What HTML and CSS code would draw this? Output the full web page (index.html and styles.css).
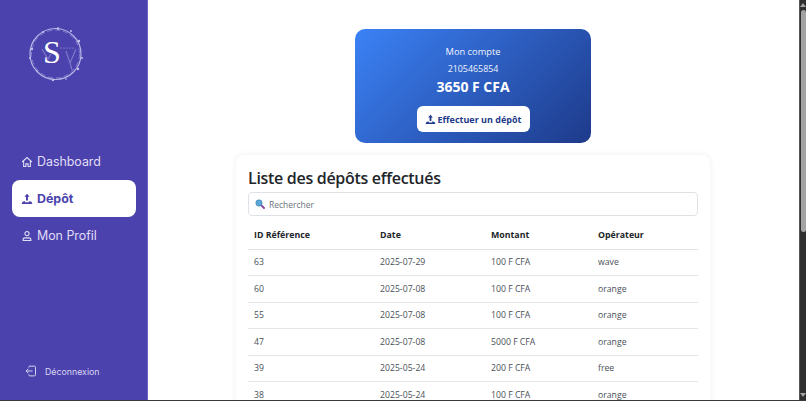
FILE: index.html
```html
<!DOCTYPE html>
<html lang="fr">
<head>
<meta charset="utf-8">
<title>Dépôts</title>
<link rel="stylesheet" href="styles.css">
</head>
<body>
<div class="frame">
  <aside class="sidebar">
    <div class="logo">
      <svg width="60" height="60" viewBox="0 0 60 60" fill="none">
        <circle cx="29.5" cy="29" r="25.500" stroke="#b9b5e6" stroke-width="1.200"/>
        <circle cx="29.5" cy="29" r="24" stroke="#8f89d6" stroke-width=".8" stroke-dasharray="5 3"/>
        <g fill="#c4c0ec">
          <circle cx="17" cy="7" r="1"/><circle cx="32" cy="3.500" r="1.200"/><circle cx="45" cy="6" r="1"/><circle cx="53" cy="16" r="1.200"/>
          <circle cx="56" cy="33" r="1"/><circle cx="52" cy="44" r="1.200"/><circle cx="40" cy="54" r=".8"/><circle cx="27" cy="55" r="1.200"/>
          <circle cx="11" cy="46" r=".8"/><circle cx="4" cy="33" r="1"/><circle cx="6" cy="24" r="1.200"/>
        </g>
        <path d="M16 24l6 10 3-5M40 26l4 12 6-14M44 38l2 7" stroke="#7d77cc" stroke-width="1.200"/>
        <g fill="#c4c0ec">
          <circle cx="35" cy="23" r=".5"/><circle cx="38" cy="23" r=".5"/><circle cx="41" cy="23" r=".5"/><circle cx="44" cy="23" r=".5"/><circle cx="47" cy="23" r=".5"/>
        </g>
        <text x="26" y="38" text-anchor="middle" class="logo-s">S</text>
      </svg>
    </div>
    <nav class="nav">
      <a class="nav-item">
        <svg class="nav-icon" viewBox="0 0 16 16" fill="none" stroke="currentColor" stroke-width="1.400"><path d="M1.500 8 8 2l6.500 6M3.500 6.500V14h3v-3.500h3V14h3V6.500"/></svg>
        Dashboard
      </a>
      <a class="nav-item active">
        <svg class="nav-icon" viewBox="0 0 16 16" fill="currentColor"><path d="M8 1 4.500 5h2.200v5h2.600V5h2.200z"/><path d="M1 14.500c0-2.200 1.500-3.500 3.500-3.500h1v1.200h5V11h1c2 0 3.500 1.300 3.500 3.500z"/></svg>
        Dépôt
      </a>
      <a class="nav-item">
        <svg class="nav-icon" viewBox="0 0 16 16" fill="none" stroke="currentColor" stroke-width="1.400"><circle cx="8" cy="4.800" r="2.800"/><path d="M2.800 14v-1c0-1.700 1.300-2.500 3-2.500h4.400c1.700 0 3 .8 3 2.500v1z"/></svg>
        Mon Profil
      </a>
    </nav>
    <a class="logout">
      <svg class="logout-icon" viewBox="0 0 16 16" fill="none" stroke="currentColor" stroke-width="1.300"><path d="M5 3.500V3a1.500 1.500 0 0 1 1.500-1.500h6A1.500 1.500 0 0 1 14 3v10a1.500 1.500 0 0 1-1.500 1.500h-6A1.500 1.500 0 0 1 5 13v-.5M10 8H1.500M4.500 5 1.500 8l3 3"/></svg>
      Déconnexion
    </a>
  </aside>
  <main class="main">
    <section class="account">
      <p class="account-label">Mon compte</p>
      <p class="account-number">2105465854</p>
      <p class="account-balance">3650 F CFA</p>
      <button class="deposit-btn">
        <svg class="btn-icon" viewBox="0 0 16 16" fill="currentColor"><path d="M8 1 4.500 5h2.200v5h2.600V5h2.200z"/><path d="M1 14.500c0-2.200 1.500-3.500 3.500-3.500h1v1.200h5V11h1c2 0 3.500 1.300 3.500 3.500z"/></svg>
        Effectuer un dépôt
      </button>
    </section>
    <section class="list">
      <h2 class="list-title">Liste des dépôts effectués</h2>
      <div class="search">
        <svg class="search-icon" viewBox="0 0 12 12"><path d="M7 7l3.800 3.800" stroke="#8a3f9e" stroke-width="2.200" stroke-linecap="round"/><circle cx="4.800" cy="4.800" r="3.800" fill="#5ba7d8" stroke="#3f83b5" stroke-width=".8"/></svg>
        <span>Rechercher</span>
      </div>
      <table class="table">
        <colgroup><col class="c1"><col class="c2"><col class="c3"><col class="c4"></colgroup>
        <thead><tr><th>ID Référence</th><th>Date</th><th>Montant</th><th>Opérateur</th></tr></thead>
        <tbody>
          <tr><td>63</td><td>2025-07-29</td><td>100 F CFA</td><td>wave</td></tr>
          <tr><td>60</td><td>2025-07-08</td><td>100 F CFA</td><td>orange</td></tr>
          <tr><td>55</td><td>2025-07-08</td><td>100 F CFA</td><td>orange</td></tr>
          <tr><td>47</td><td>2025-07-08</td><td>5000 F CFA</td><td>orange</td></tr>
          <tr><td>39</td><td>2025-05-24</td><td>200 F CFA</td><td>free</td></tr>
          <tr><td>38</td><td>2025-05-24</td><td>100 F CFA</td><td>orange</td></tr>
        </tbody>
      </table>
    </section>
  </main>
  <div class="scrollbar">
    <span class="arrow-up"></span>
    <span class="thumb"></span>
    <span class="arrow-down"></span>
  </div>
</div>
</body>
</html>
```

FILE: styles.css
```css
* { box-sizing: border-box; }
html, body { margin: 0; height: 401px; overflow: hidden; background: #fff; }
body { font-family: "Open Sans", "Liberation Sans", sans-serif; color: #212529; }
.frame { display: flex; height: 401px; border-bottom: 1px solid #3a3a3a; }

.sidebar { width: 148px; flex: none; background: #4b42ad; border-right: 1px solid #6d66c2; display: flex; flex-direction: column; padding: 0 11px 0 12px; }
.logo { height: 143px; padding: 25px 0 0 14px; flex: none; }
.logo svg { display: block; }
.logo-s { font-family: "Liberation Serif", serif; font-size: 32px; fill: #fff; }
.nav { display: flex; flex-direction: column; }
.nav-item { height: 37px; display: flex; align-items: center; gap: 4px; padding-left: 9px; border-radius: 8px; color: #e0def5; font-family: "Inter", sans-serif; font-size: 12.400px; }
.nav-item.active { background: #fff; color: #4b42ad; font-weight: 700; }
.nav-icon { width: 12px; height: 12px; flex: none; }
.logout { margin-top: auto; margin-bottom: 21px; display: flex; align-items: center; gap: 8px; padding-left: 13px; color: #d9d6f2; font-family: "Inter", sans-serif; font-size: 8.800px; height: 16px; }
.logout-icon { width: 12px; height: 12px; flex: none; }

.main { flex: 1; min-width: 0; overflow: hidden; display: flex; flex-direction: column; align-items: center; padding: 29px 1px 0 0; }
.account { width: 236px; height: 114px; flex: none; border-radius: 10px; background: linear-gradient(135deg, #3b82f6, #1e3a8a); color: #fff; display: flex; flex-direction: column; align-items: center; padding-top: 14px; }
.account p { margin: 0; }
.account-label { font-size: 9.300px; line-height: 16px; color: #f0f4fe; padding-top: 1px; }
.account-number { font-size: 8.900px; line-height: 16px; margin-top: 1px !important; color: #f0f4fe; }
.account-balance { font-size: 14px; font-weight: 700; line-height: 20px; }
.deposit-btn { margin-top: 9px; width: 113px; height: 26px; border: 0; border-radius: 6px; background: #fff; color: #1e3a8a; font-family: inherit; font-size: 9px; font-weight: 700; display: flex; align-items: center; justify-content: center; gap: 2px; padding: 0; }
.btn-icon { width: 11px; height: 11px; flex: none; }

.list { width: 474px; flex: none; margin-top: 12px; padding: 10px 12px 0; border-radius: 8px; background: #fff; box-shadow: 0 0 6px rgba(0, 0, 0, .07); }
.list-title { margin: 0; font-size: 16px; font-weight: 600; letter-spacing: -.3px; line-height: 26px; color: #212529; }
.search { height: 24px; margin-top: 1px; border: 1px solid #dee2e6; border-radius: 4px; display: flex; align-items: center; gap: 4px; padding-left: 6px; font-size: 8.500px; color: #6c757d; }
.search-icon { width: 10px; height: 10px; flex: none; }
.table { width: 450px; margin-top: 6px; border-collapse: collapse; table-layout: fixed; font-size: 8.700px; }
.c1 { width: 126px; } .c2 { width: 111px; } .c3 { width: 107px; } .c4 { width: 106px; }
.table th { height: 27px; padding: 0 6px; text-align: left; font-weight: 700; font-size: 8.800px; border-bottom: 1px solid #dee2e6; color: #212529; }
.table td { height: 26.500px; padding: 0 6px; color: #495057; border-bottom: 1px solid #e3e6ea; }

.scrollbar { width: 7px; flex: none; background: #2f2f2f; display: flex; flex-direction: column; align-items: center; padding: 3px 0 3px; border-left: 1px solid #555; }
.thumb { width: 5px; height: 222px; margin-top: 3px; border-radius: 3px; background: #a3a3a3; }
.arrow-up, .arrow-down { width: 0; height: 0; border-left: 3px solid transparent; border-right: 3px solid transparent; }
.arrow-up { border-bottom: 4px solid #a3a3a3; }
.arrow-down { margin-top: auto; border-top: 4px solid #a3a3a3; }
```
